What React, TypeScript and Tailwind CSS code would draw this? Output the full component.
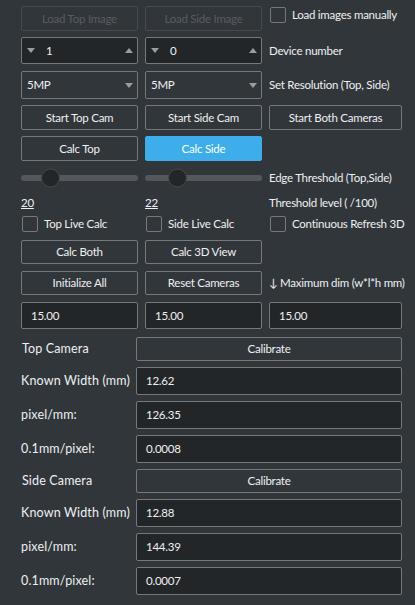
import React from 'react'

const font = { fontFamily: 'Lato, "Liberation Sans", sans-serif' }

const Btn: React.FC<{ label: string; disabled?: boolean; active?: boolean; className?: string }> = ({ label, disabled, active, className = '' }) => (
  <div
    className={
      'flex items-center justify-center rounded-[2px] border ' +
      (active
        ? 'border-[#3daee9] bg-[#3daee9] text-white '
        : disabled
        ? 'border-[#464a4e] bg-[#31363b] text-[#585c60] '
        : 'border-[#76797c] bg-[#31363b] text-[#eff0f1] ') +
      className
    }
  >
    {label}
  </div>
)

const Spin: React.FC<{ value: string }> = ({ value }) => (
  <div className="flex h-full items-center rounded-[2px] border border-[#76797c] bg-[#232629] pl-[5px] pr-[4px] text-[#eff0f1]">
    <svg width="8" height="5" viewBox="0 0 8 5"><path d="M0 0h8L4 5z" fill="#9a9c9e" /></svg>
    <span className="ml-[11px] flex-1">{value}</span>
    <svg width="8" height="5" viewBox="0 0 8 5"><path d="M0 5h8L4 0z" fill="#9a9c9e" /></svg>
  </div>
)

const Combo: React.FC<{ value: string }> = ({ value }) => (
  <div className="flex h-full items-center rounded-[2px] border border-[#76797c] bg-[#31363b] pl-[5px] pr-[4px] text-[#eff0f1]">
    <span className="flex-1">{value}</span>
    <svg width="8" height="5" viewBox="0 0 8 5"><path d="M0 0h8L4 5z" fill="#9a9c9e" /></svg>
  </div>
)

const Check: React.FC<{ label: string }> = ({ label }) => (
  <div className="flex items-center gap-[6px] text-[#eff0f1]">
    <div className="h-[16px] w-[16px] shrink-0 rounded-[2px] border border-[#76797c] bg-[#31363b]" />
    <span className="whitespace-nowrap">{label}</span>
  </div>
)

const Slider: React.FC<{ pos: number }> = ({ pos }) => (
  <div className="relative flex h-full items-center">
    <div className="h-[6px] w-full rounded-[3px] bg-[#54585c]" />
    <div
      className="absolute top-1/2 h-[19px] w-[19px] -translate-y-1/2 rounded-full border border-[#464a4e] bg-[#232629]"
      style={{ left: pos }}
    />
  </div>
)

const Field: React.FC<{ value: string; className?: string }> = ({ value, className = '' }) => (
  <div className={'flex items-center rounded-[2px] border border-[#76797c] bg-[#232629] pl-[9px] text-[#eff0f1] ' + className}>
    {value}
  </div>
)

const row = 'grid grid-cols-[117px_117px_133px] gap-x-[7px]'
const label = 'whitespace-nowrap text-[12.5px] tracking-[0.15px]'

const CameraBlock: React.FC<{ title: string; width: string; ppm: string; mmpp: string; top: string }> = ({ title, width, ppm, mmpp, top }) => (
  <div className={'flex flex-col ' + top}>
    <div className="grid h-[24px] grid-cols-[115px_266px] items-center">
      <span className={label + ' pl-[1px]'}>{title}</span>
      <Btn label="Calibrate" className="h-full" />
    </div>
    <div className="mt-[6px] grid h-[28px] grid-cols-[115px_266px] items-center">
      <span className={label}>Known Width (mm)</span>
      <Field value={width} className="h-full" />
    </div>
    <div className="mt-[6px] grid h-[28px] grid-cols-[115px_266px] items-center">
      <span className={label}>pixel/mm:</span>
      <Field value={ppm} className="h-full" />
    </div>
    <div className="mt-[6px] grid h-[28px] grid-cols-[115px_266px] items-center">
      <span className={label}>0.1mm/pixel:</span>
      <Field value={mmpp} className="h-full" />
    </div>
  </div>
)

export default function App() {
  return (
    <div
      className="h-[605px] w-[415px] overflow-hidden bg-[#31363b] pl-[21px] text-[11.5px] tracking-[-0.25px] text-[#eff0f1]"
      style={font}
    >
      <div className={row + ' h-[25px] mt-[6px]'}>
        <Btn label="Load Top Image" disabled />
        <Btn label="Load Side Image" disabled />
        <div className="pl-[1px]"><Check label="Load images manually" /></div>
      </div>

      <div className={row + ' h-[27px] mt-[6px] items-center'}>
        <Spin value="1" />
        <Spin value="0" />
        <span>Device number</span>
      </div>

      <div className={row + ' h-[28px] mt-[7px] items-center'}>
        <Combo value="5MP" />
        <Combo value="5MP" />
        <span className="whitespace-nowrap">Set Resolution (Top, Side)</span>
      </div>

      <div className={row + ' h-[25px] mt-[6px]'}>
        <Btn label="Start Top Cam" />
        <Btn label="Start Side Cam" />
        <Btn label="Start Both Cameras" />
      </div>

      <div className={row + ' h-[25px] mt-[6px]'}>
        <Btn label="Calc Top" />
        <Btn label="Calc Side" active />
        <div />
      </div>

      <div className={row + ' h-[20px] mt-[7px] items-center'}>
        <Slider pos={20} />
        <Slider pos={23} />
        <span className="whitespace-nowrap">Edge Threshold (Top,Side)</span>
      </div>

      <div className={row + ' h-[14px] mt-[6px] items-center'}>
        <span className="underline">20</span>
        <span className="underline">22</span>
        <span className="whitespace-nowrap">Threshold level ( /100)</span>
      </div>

      <div className={row + ' h-[17px] mt-[7px] items-center'}>
        <div className="pl-[1px]"><Check label="Top Live Calc" /></div>
        <div className="pl-[1px]"><Check label="Side Live Calc" /></div>
        <div className="pl-[1px]"><Check label="Continuous Refresh 3D" /></div>
      </div>

      <div className={row + ' h-[24px] mt-[8px]'}>
        <Btn label="Calc Both" />
        <Btn label="Calc 3D View" />
        <div />
      </div>

      <div className={row + ' h-[24px] mt-[7px] items-center'}>
        <Btn label="Initialize All" className="h-full" />
        <Btn label="Reset Cameras" className="h-full" />
        <span className="whitespace-nowrap">↓ Maximum dim (w*l*h mm)</span>
      </div>

      <div className={row + ' h-[27px] mt-[7px]'}>
        <Field value="15.00" />
        <Field value="15.00" />
        <Field value="15.00" />
      </div>

      <CameraBlock title="Top Camera" width="12.62" ppm="126.35" mmpp="0.0008" top="mt-[8px]" />
      <CameraBlock title="Side Camera" width="12.88" ppm="144.39" mmpp="0.0007" top="mt-[6px]" />
    </div>
  )
}
